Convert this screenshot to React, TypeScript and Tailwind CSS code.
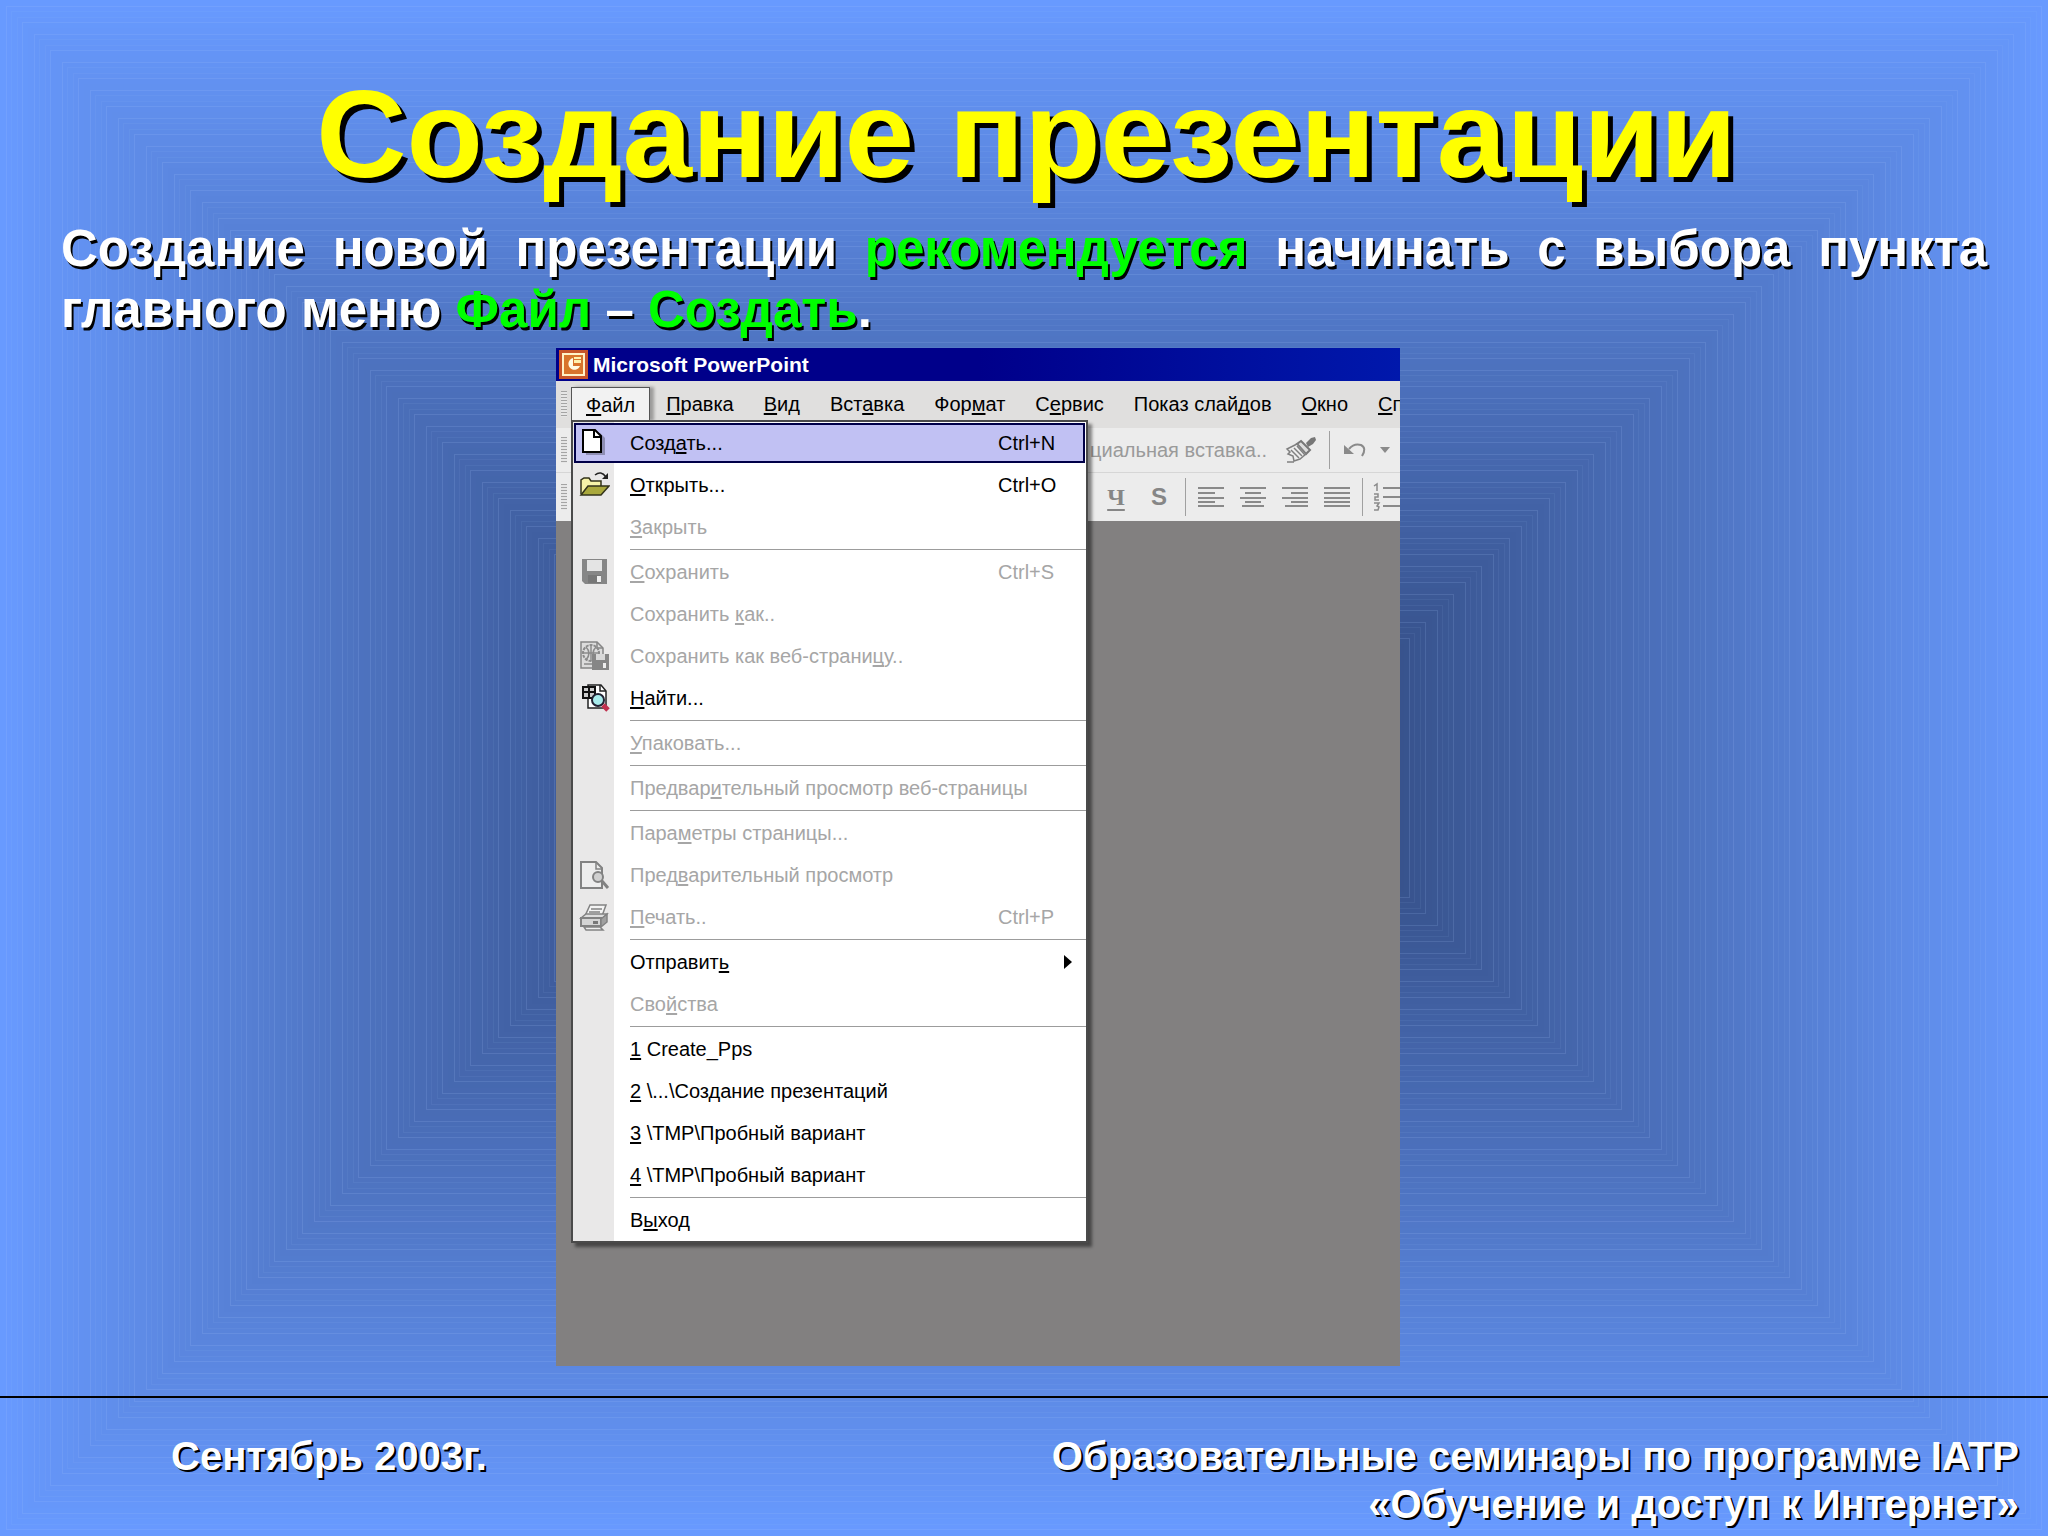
import type { ReactNode } from "react";

type MenuEntry = {
  label: string; // "&" marks the access key
  shortcut?: string;
  icon?: ReactNode;
  disabled?: boolean;
  active?: boolean;
  submenu?: boolean;
};

const STEPS = 137;

// Nested rectangles shading from the light edge to the dark centre
const bands = Array.from({ length: STEPS }).map((_, i) => {
  const exact = i * 5.6;
  const inset = Math.round(exact);
  const t = i / (STEPS - 1);
  const mix = (from: number, to: number) => Math.round(from + (to - from) * t);
  return {
    inset,
    fill: `rgb(${mix(104, 47)}, ${mix(154, 70)}, ${mix(255, 120)})`,
    seam: Math.abs(exact - inset) * 0.4,
  };
});

function Backdrop() {
  return (
    <svg className="absolute inset-0 h-full w-full" viewBox="0 0 2048 1536" preserveAspectRatio="none" aria-hidden="true">
      {bands.map((b) => (
        <g key={b.inset}>
          <rect x={b.inset} y={b.inset} width={2048 - b.inset * 2} height={1536 - b.inset * 2} fill={b.fill} />
          <rect
            x={b.inset + 0.5}
            y={b.inset + 0.5}
            width={2047 - b.inset * 2}
            height={Math.max(1535 - b.inset * 2, 0)}
            fill="none"
            stroke="#a8c8ff"
            strokeOpacity={b.seam}
          />
        </g>
      ))}
    </svg>
  );
}

function AccessLabel({ text }: { text: string }) {
  const at = text.indexOf("&");
  if (at < 0) return <>{text}</>;
  return (
    <span>
      {text.slice(0, at)}
      <span className="underline decoration-2 underline-offset-2 [text-decoration-skip-ink:none]">{text[at + 1]}</span>
      {text.slice(at + 2)}
    </span>
  );
}

const iconClass = "h-[32px] w-[32px] shrink-0";

const NewIcon = (
  <svg className={iconClass} viewBox="0 0 32 32">
    <path d="M8 6h14l5 5v17H8z" fill="#8e8eb4" />
    <path d="M5 3h12l6 6v16H5z" fill="#fff" stroke="#000" strokeWidth="2" />
    <path d="M16 3v7h7" fill="none" stroke="#000" strokeWidth="2" />
  </svg>
);

const OpenIcon = (
  <svg className={iconClass} viewBox="0 0 32 32">
    <path d="M3 25V11l3-2h5l2 3h10v5" fill="#f6f3a8" stroke="#33331a" strokeWidth="1.5" />
    <path d="M3 26l7-9h21l-8 9z" fill="#a9a83c" stroke="#33331a" strokeWidth="1.5" />
    <path d="M17 6q6-5 11 2" fill="none" stroke="#222" strokeWidth="1.5" />
    <path d="M30 4v6h-6z" fill="#222" />
  </svg>
);

const SaveIcon = (
  <svg className={iconClass} viewBox="0 0 32 32">
    <path d="M4 3h25v25H7l-3-3z" fill="#868686" />
    <path d="M9 4h15v11H9z" fill="#e4e4e4" />
    <path d="M10 19h13v8H10z" fill="#777" />
    <path d="M19 20h4v6h-4z" fill="#eee" />
  </svg>
);

const SaveWebIcon = (
  <svg className={iconClass} viewBox="0 0 32 32">
    <path d="M3 2h16l6 6v20H3z" fill="#dcdcdc" stroke="#858585" strokeWidth="1.5" />
    <path d="M19 2v6h6" fill="none" stroke="#858585" strokeWidth="1.5" />
    <circle cx="13" cy="13" r="8" fill="none" stroke="#8a8a8a" strokeWidth="2" strokeDasharray="3 1" />
    <path d="M5 13h16M13 5v16M8 7q6 6 0 13M18 7q-6 6 0 13M6 24h8" fill="none" stroke="#8a8a8a" strokeWidth="1.5" />
    <path d="M14 14h17v16H14z" fill="#868686" />
    <path d="M18 14h9v6h-9z" fill="#d8d8d8" />
    <path d="M25 23h3v5h-3z" fill="#eee" />
  </svg>
);

const FindIcon = (
  <svg className={iconClass} viewBox="0 0 32 32">
    <path d="M10 3h13l5 6v17H10z" fill="#fff" stroke="#222" strokeWidth="1.5" />
    <path d="M22 3v6h6" fill="none" stroke="#222" strokeWidth="1.5" />
    <path d="M5 5h12v11H5z" fill="#ccc" stroke="#111" strokeWidth="2" />
    <path d="M11 5v11M5 10h12" stroke="#111" strokeWidth="2" />
    <circle cx="20" cy="18" r="6" fill="#a8ecec" stroke="#223" strokeWidth="2" />
    <path d="M25 23l5 5" stroke="#c0304e" strokeWidth="5" />
  </svg>
);

const PreviewIcon = (
  <svg className={iconClass} viewBox="0 0 32 32">
    <path d="M3 3h15l6 6v20H3z" fill="#ededed" stroke="#828282" strokeWidth="2" />
    <path d="M18 3v7h6" fill="none" stroke="#828282" strokeWidth="1.5" />
    <circle cx="20" cy="18" r="5" fill="#d0d0d0" stroke="#828282" strokeWidth="2" />
    <path d="M24 22l6 7" stroke="#828282" strokeWidth="3" />
  </svg>
);

const PrintIcon = (
  <svg className={iconClass} viewBox="0 0 32 32">
    <path d="M12 4h16l-4 11H7z" fill="#f4f4f4" stroke="#828282" strokeWidth="1.5" />
    <path d="M13 8h11M11 11h11" stroke="#828282" strokeWidth="1.5" />
    <path d="M3 17l5-4h21l-5 5z" fill="#ddd" stroke="#828282" strokeWidth="1.5" />
    <path d="M3 17h20v8H3z" fill="#d4d4d4" stroke="#828282" strokeWidth="2" />
    <path d="M23 18l6-5v8l-6 5z" fill="#a0a0a0" stroke="#828282" strokeWidth="1.5" />
    <path d="M6 26h16l3 3H8z" fill="#eee" stroke="#828282" strokeWidth="1.5" />
    <path d="M15 20h5v3h-5z" fill="#777" />
  </svg>
);

const fileMenu: MenuEntry[][] = [
  [
    { label: "Созд&ать...", shortcut: "Ctrl+N", icon: NewIcon, active: true },
    { label: "&Открыть...", shortcut: "Ctrl+O", icon: OpenIcon },
    { label: "&Закрыть", disabled: true },
  ],
  [
    { label: "&Сохранить", shortcut: "Ctrl+S", icon: SaveIcon, disabled: true },
    { label: "Сохранить &как..", disabled: true },
    { label: "Сохранить как веб-страни&цу..", icon: SaveWebIcon, disabled: true },
    { label: "&Найти...", icon: FindIcon },
  ],
  [{ label: "&Упаковать...", disabled: true }],
  [{ label: "Предвар&ительный просмотр веб-страницы", disabled: true }],
  [
    { label: "Пара&метры страницы...", disabled: true },
    { label: "Пред&варительный просмотр", icon: PreviewIcon, disabled: true },
    { label: "&Печать..", shortcut: "Ctrl+P", icon: PrintIcon, disabled: true },
  ],
  [
    { label: "Отправит&ь", submenu: true },
    { label: "Сво&йства", disabled: true },
  ],
  [
    { label: "&1 Create_Pps" },
    { label: "&2 \\...\\Создание презентаций" },
    { label: "&3 \\TMP\\Пробный вариант" },
    { label: "&4 \\TMP\\Пробный вариант" },
  ],
  [{ label: "В&ыход" }],
];

const menuBar = ["&Правка", "&Вид", "Вст&авка", "Фор&мат", "С&ервис", "Показ слай&дов", "&Окно", "&Сп"];

function MenuRow({ item }: { item: MenuEntry }) {
  return (
    <button
      type="button"
      role="menuitem"
      disabled={item.disabled}
      className={`relative flex h-[42px] w-full items-center text-left ${item.disabled ? "text-[#a6a6a6]" : "text-black"}`}
    >
      {item.active && <span className="absolute inset-x-px top-px bottom-px border-2 border-[#000048] bg-[#c1c1f3]" />}
      <span className="relative flex w-[41px] justify-center">{item.icon}</span>
      <span className="relative ml-[16px] flex-1 whitespace-nowrap">
        <AccessLabel text={item.label} />
      </span>
      {item.shortcut && <span className="relative w-[88px]">{item.shortcut}</span>}
      {item.submenu && (
        <svg className="mr-[14px] h-[14px] w-[8px]" viewBox="0 0 8 14">
          <path d="M0 0l8 7-8 7z" />
        </svg>
      )}
    </button>
  );
}

function FileMenu() {
  return (
    <div
      role="menu"
      className="absolute top-[32px] -left-px z-10 w-[517px] border-2 border-[#4a4a4a] bg-[linear-gradient(to_right,#e9e8e8_41px,#ffffff_41px)] shadow-[4px_4px_3px_rgba(0,0,0,0.45)]"
    >
      {fileMenu.map((group, i) => (
        <div key={i}>
          {i > 0 && (
            <div className="flex h-[3px] items-center pl-[57px]">
              <div className="h-px flex-1 bg-[#9c9c9c]" />
            </div>
          )}
          {group.map((item) => (
            <MenuRow key={item.label} item={item} />
          ))}
        </div>
      ))}
    </div>
  );
}

function Grip() {
  return <div className="ml-[5px] h-[26px] w-[6px] shrink-0 bg-[repeating-linear-gradient(to_bottom,#a4a4a4_0_1px,#e6e6e6_1px_3px)]" />;
}

function Divider() {
  return <div className="h-[38px] w-px shrink-0 bg-[#a0a0a0]" />;
}

function AlignIcon({ d }: { d: string }) {
  return (
    <svg className="h-[22px] w-[26px]" viewBox="0 0 26 22" aria-hidden="true">
      <path d={d} stroke="#8a8a8a" strokeWidth="2" />
    </svg>
  );
}

function PowerPointWindow() {
  return (
    <section className="overflow-hidden font-['Liberation_Sans',Arial,sans-serif] text-[20px] leading-[24px] text-black">
      <header className="flex h-[33px] items-center gap-[5px] bg-linear-to-r from-[#00008a] from-50% to-[#0018ac] pl-[3px]">
        <svg className="h-[29px] w-[29px]" viewBox="0 0 29 29" aria-hidden="true">
          <path d="M0 0h29v29H0z" fill="#c8552a" />
          <path d="M4 4h21v21H4z" fill="#d8742c" stroke="#fff2c8" strokeWidth="2" />
          <path d="M14 8a6 6 0 1 0 7 8h-7z" fill="#fffbe6" />
          <path d="M15 7h7v2h-7zM15 10h7v3h-7z" fill="#fff2b0" />
        </svg>
        <h2 className="text-[21px] font-bold text-white">Microsoft PowerPoint</h2>
      </header>

      <nav className="flex h-[47px] items-start gap-[2px] bg-[#e0dfde] pt-[6px] whitespace-nowrap">
        <div className="flex h-[34px] w-[13px] shrink-0 items-center">
          <Grip />
        </div>
        <div className="relative h-[34px] shrink-0 border border-b-0 border-[#555] bg-[#f2f2f2] shadow-[4px_0_3px_rgba(0,0,0,0.3)]">
          <button type="button" className="h-full px-[14px]">
            <AccessLabel text="&Файл" />
          </button>
          <FileMenu />
        </div>
        {menuBar.map((label) => (
          <button key={label} type="button" className="h-[34px] shrink-0 px-[14px]">
            <AccessLabel text={label} />
          </button>
        ))}
      </nav>

      <div className="flex h-[45px] items-center border-b border-[#d6d6d6] bg-[#ececec] pr-[10px]">
        <Grip />
        <button type="button" disabled className="ml-auto whitespace-nowrap text-[#9a9a9a]">
          циальная вставка..
        </button>
        <button type="button" disabled aria-label="Формат по образцу" className="ml-[18px]">
          <svg className="h-[30px] w-[32px]" viewBox="0 0 32 30">
            <path d="M21 8l5-5 4-1 1 3-3 4-5 3z" fill="#777" />
            <path d="M16 6l9 9-4 4-9-10z" fill="#ddd" stroke="#777" strokeWidth="2" />
            <path d="M12 9L2 14l3 3-2 2 5 2 1 5 6-2 6-5z" fill="#eee" stroke="#808080" strokeWidth="1.5" />
            <path d="M6 15l8 8M9 13l8 8M12 11l8 9M2 27h7" stroke="#808080" strokeWidth="1.5" />
          </svg>
        </button>
        <div className="mx-[12px] flex">
          <Divider />
        </div>
        <button type="button" disabled aria-label="Отменить">
          <svg className="h-[20px] w-[26px]" viewBox="0 0 26 20">
            <path d="M7 9q5-6 12-4 6 3 1 11" fill="none" stroke="#8a8a8a" strokeWidth="2" />
            <path d="M2 5v9h10z" fill="#8a8a8a" />
          </svg>
        </button>
        <svg className="ml-[12px] h-[6px] w-[10px]" viewBox="0 0 10 6" aria-hidden="true">
          <path d="M0 0h10l-5 6z" fill="#8a8a8a" />
        </svg>
      </div>

      <div className="flex h-[48px] items-center bg-[#ececec] text-[#868686]">
        <Grip />
        <button type="button" disabled className="ml-auto w-[18px] font-['Liberation_Serif',serif] text-[24px] font-bold underline underline-offset-4">
          Ч
        </button>
        <button type="button" disabled className="mr-[18px] ml-[26px] font-['Liberation_Sans',sans-serif] text-[24px] font-bold">
          S
        </button>
        <Divider />
        <div className="mx-[12px] flex gap-[16px]">
          <AlignIcon d="M0 2h26M0 7h17M0 12h26M0 16h17M0 20h26" />
          <AlignIcon d="M0 2h26M5 7h16M0 12h26M5 16h16M2 20h22" />
          <AlignIcon d="M0 2h26M9 7h17M0 12h26M9 16h17M3 20h23" />
          <AlignIcon d="M0 2h26M0 7h26M0 12h26M0 16h26M0 20h26" />
        </div>
        <Divider />
        <svg className="ml-[10px] h-[30px] w-[27px]" viewBox="0 0 27 30" aria-hidden="true">
          <path d="M10 6h17M10 15h17M10 24h17" stroke="#8a8a8a" strokeWidth="2" />
          <path d="M1 4l3-2v7M1 12h4v3H2v3h4M1 21h5l-2 3 2 1-1 3H1" fill="none" stroke="#8a8a8a" strokeWidth="1.5" />
        </svg>
      </div>

      <div className="h-[845px] bg-[#828080]" />
    </section>
  );
}

export default function App() {
  return (
    <main className="relative flex min-h-screen flex-col overflow-hidden bg-[#6699ff] font-['Liberation_Sans',Arial,sans-serif]">
      <Backdrop />
      <div className="relative flex flex-1 flex-col pt-[59px]">
        <h1 className="pl-[5px] text-center text-[125px] leading-[150px] font-bold text-[#ffff00] [text-shadow:5px_5px_0_#000]">
          Создание презентации
        </h1>
        <p className="mt-[9px] px-[61px] text-justify text-[51px] leading-[61px] font-bold text-white [text-shadow:2px_3px_0_#000]">
          Создание новой презентации <span className="text-[#00ff00]">рекомендуется</span> начинать с выбора пункта
          главного меню <span className="text-[#00ff00]">Файл</span> – <span className="text-[#00ff00]">Создать</span>.
        </p>
        <div className="mt-[8px] grid grid-cols-[556fr_844fr_648fr]">
          <div className="col-start-2 min-w-0">
            <PowerPointWindow />
          </div>
        </div>
        <div className="mt-[30px] h-[2px] bg-black" />
        <footer className="mt-[34px] flex justify-between pr-[29px] pl-[171px] text-[40px] leading-[48px] font-bold text-white [text-shadow:2px_2px_0_#000]">
          <p>Сентябрь 2003г.</p>
          <p className="text-right">
            Образовательные семинары по программе IATP
            <br />
            «Обучение и доступ к Интернет»
          </p>
        </footer>
      </div>
    </main>
  );
}
